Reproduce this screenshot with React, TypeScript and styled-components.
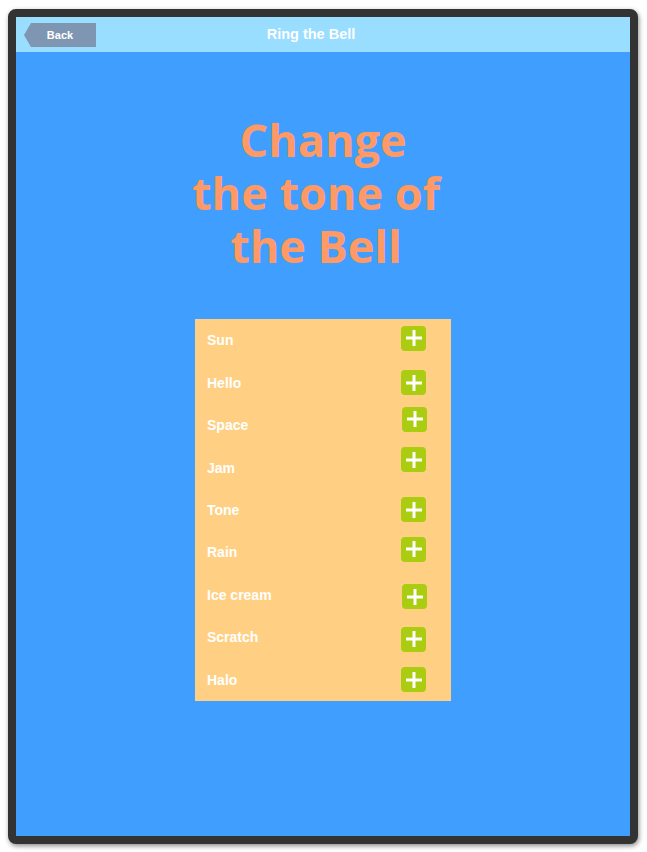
import React from "react";
import styled, { createGlobalStyle } from "styled-components";

const Global = createGlobalStyle`
  html, body { margin: 0; padding: 0; background: #ffffff; }
  body { font-family: "Liberation Sans", Arial, sans-serif; }
`;

const Page = styled.div`
  width: 647px;
  height: 852px;
  padding: 9px 9px 8px 8px;
  box-sizing: border-box;
`;

const Device = styled.div`
  width: 630px;
  height: 835px;
  box-sizing: border-box;
  border: 8px solid #333333;
  border-radius: 8px;
  background: #409eff;
  box-shadow: 1px 2px 5px rgba(0, 0, 0, 0.45);
  display: flex;
  flex-direction: column;
  overflow: hidden;
`;

const Header = styled.div`
  height: 35px;
  flex: none;
  background: #99ddff;
  display: flex;
  align-items: center;
  padding-left: 8px;
`;

const BackButton = styled.button`
  width: 72px;
  height: 24px;
  border: none;
  margin: 0;
  padding: 0;
  background: #7f96b2;
  color: #ffffff;
  font-family: "Liberation Sans", Arial, sans-serif;
  font-weight: bold;
  font-size: 11px;
  clip-path: polygon(7px 0, 100% 0, 100% 100%, 7px 100%, 0 50%);
  cursor: pointer;
  margin-top: 1px;
`;

const Title = styled.div`
  flex: 1;
  text-align: center;
  padding-right: 104px;
  color: #ffffff;
  font-weight: bold;
  font-size: 14.5px;
  margin-top: -1px;
`;

const Body = styled.div`
  flex: 1;
  display: flex;
  flex-direction: column;
  align-items: center;
`;

const Heading = styled.h1`
  margin: 61px 0 0 0;
  color: #ff9966;
  font-family: "Open Sans", sans-serif;
  font-weight: 700;
  font-size: 45px;
  line-height: 53px;
  text-align: center;
`;

const Line = styled.span<{ $shift?: number }>`
  display: block;
  padding-right: ${(p) => p.$shift ?? 0}px;
`;

const List = styled.ul`
  list-style: none;
  margin: 47px 0 0 0;
  padding: 0 25px 0 12px;
  width: 256px;
  height: 382px;
  box-sizing: border-box;
  background: #ffd083;
  display: grid;
  grid-template-rows: repeat(9, 1fr);
`;

const Row = styled.li`
  display: flex;
  align-items: center;
  justify-content: space-between;
  color: #ffffff;
  font-weight: bold;
  font-size: 14px;
`;

const AddButton = styled.button<{ $dy: number; $dx: number }>`
  position: relative;
  top: ${(p) => p.$dy}px;
  left: ${(p) => p.$dx}px;
  width: 25px;
  height: 25px;
  border: none;
  padding: 0;
  border-radius: 4px;
  background: #aacc11;
  cursor: pointer;
  &::before, &::after {
    content: "";
    position: absolute;
    background: #ffffff;
    left: 50%;
    top: 50%;
    transform: translate(-50%, -50%);
  }
  &::before { width: 16px; height: 3px; }
  &::after { width: 3px; height: 16px; }
`;

const tones = [
  { name: "Sun", dy: -2, dx: 0 },
  { name: "Hello", dy: 0, dx: 0 },
  { name: "Space", dy: -6, dx: 1 },
  { name: "Jam", dy: -8, dx: 0 },
  { name: "Tone", dy: 0, dx: 0 },
  { name: "Rain", dy: -3, dx: 0 },
  { name: "Ice cream", dy: 2, dx: 1 },
  { name: "Scratch", dy: 2, dx: 0 },
  { name: "Halo", dy: 0, dx: 0 },
];

export default function App() {
  return (
    <>
      <Global />
      <Page>
        <Device>
          <Header>
            <BackButton>Back</BackButton>
            <Title>Ring the Bell</Title>
          </Header>
          <Body>
            <Heading>
              <Line>Change</Line>
              <Line $shift={14}>the tone of</Line>
              <Line $shift={14}>the Bell</Line>
            </Heading>
            <List>
              {tones.map((t) => (
                <Row key={t.name}>
                  <span>{t.name}</span>
                  <AddButton $dy={t.dy} $dx={t.dx} aria-label={`Add ${t.name}`} />
                </Row>
              ))}
            </List>
          </Body>
        </Device>
      </Page>
    </>
  );
}
